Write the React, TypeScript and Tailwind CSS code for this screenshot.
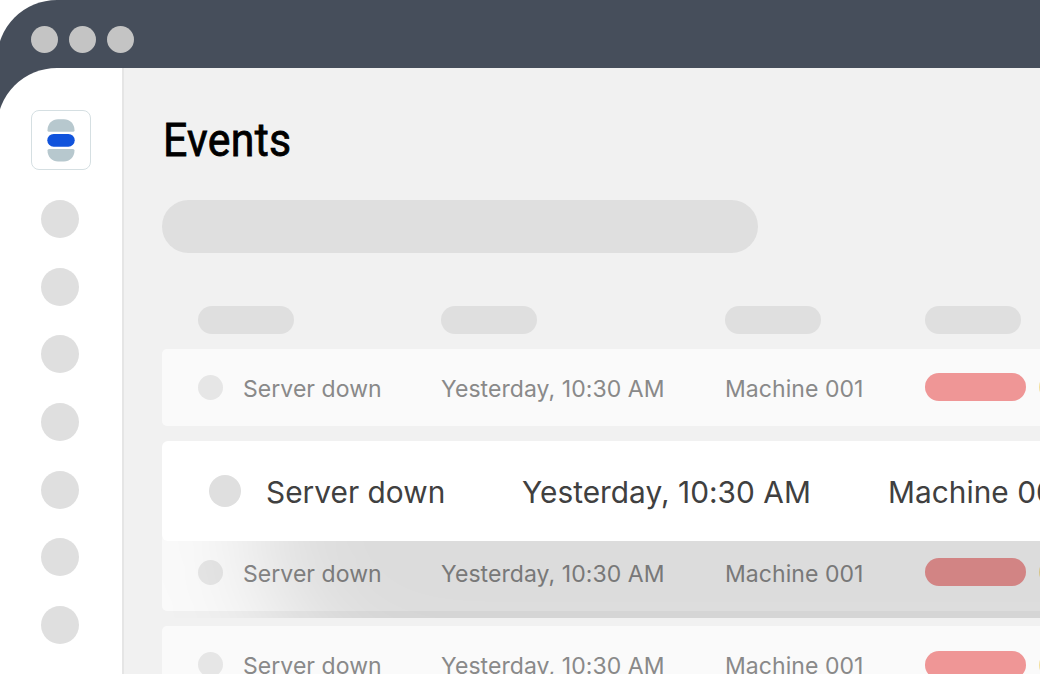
const columns = "grid grid-cols-[243px_284px_200px_114px_100px]";

function EventRow() {
  return (
    <div className={`${columns} h-[77.3px] w-[1000px] shrink-0 items-center rounded-[5px] bg-white/65 pl-9`}>
      <div className="flex items-center gap-5">
        <span className="size-[25px] rounded-full bg-[#e6e6e6]" />
        <Cell>Server down</Cell>
      </div>
      <Cell>Yesterday, 10:30 AM</Cell>
      <Cell>Machine 001</Cell>
      <span className="h-7 w-[101px] rounded-full bg-[#ef9696]" />
      <span className="h-7 w-[101px] rounded-full bg-[#f3df9b]" />
    </div>
  );
}

function Cell({ children }: { children: string }) {
  return (
    <span className="mt-[3px] whitespace-nowrap text-[23px] leading-7 tracking-[0.06px] text-[#898989]">{children}</span>
  );
}

function Logo() {
  return (
    <div className="flex size-[60px] items-center justify-center rounded-[8px] border border-[#d5dfe2] bg-white">
      <svg className="-mt-[1px]" width="28" height="44" viewBox="0 0 28 44" fill="none">
        <path d="M0.5 12.2C0.5 5.5 5.4 1.2 11 1.2H17C22.6 1.2 27.5 5.5 27.5 12.2Q27.5 13.7 26 13.7H2Q0.5 13.7 0.5 12.2Z" fill="#b7c8ce" />
        <rect x="0.3" y="16" width="27.4" height="12.7" rx="6.35" fill="#1053dc" />
        <path d="M0.5 32.5Q0.5 31 2 31H26Q27.5 31 27.5 32.5C27.5 39.2 22.6 43.5 17 43.5H11C5.4 43.5 0.5 39.2 0.5 32.5Z" fill="#b7c8ce" />
      </svg>
    </div>
  );
}

export default function App() {
  return (
    <div className="h-[674px] w-[1040px] overflow-hidden bg-white font-['Inter',sans-serif]">
      <div className="-ml-[3px] flex h-full flex-col rounded-tl-[60px] bg-[linear-gradient(#464e5b_130px,white_130px)]">
        <header className="flex h-[67.5px] shrink-0 items-center gap-[11px] pl-[34px] pt-3">
          <span className="size-[27px] rounded-full bg-[#c4c4c4]" />
          <span className="size-[27px] rounded-full bg-[#c4c4c4]" />
          <span className="size-[27px] rounded-full bg-[#c4c4c4]" />
        </header>
        <div className="flex min-h-0 flex-1 overflow-hidden rounded-tl-[60px] bg-white">
          <aside className="flex w-[127px] shrink-0 flex-col items-center border-r-2 border-[#e5e5e5] pl-[3px] pt-[42.5px]">
            <Logo />
            <div className="mt-[30px] flex flex-col gap-[29.7px] pr-[2px]">
              {[0, 1, 2, 3, 4, 5, 6].map((i) => (
                <span key={i} className="size-[38px] rounded-full bg-[#dfdfdf]" />
              ))}
            </div>
          </aside>
          <main className="min-w-0 flex-1 overflow-hidden bg-[#f1f1f1] pl-[38px] pt-[46px]">
            <h1 className="h-[52px] origin-left translate-x-[1px] translate-y-[1px] scale-x-[0.94] whitespace-nowrap font-['Roboto',sans-serif] text-[45.5px] font-normal leading-[52px] tracking-[0.3px] text-black [-webkit-text-stroke:0.8px_black]">
              Events
            </h1>
            <div className="mt-[34.5px] h-[52.5px] w-[596px] rounded-full bg-[#dfdfdf]" />
            <div className={`${columns} mt-[53px] w-[1000px] pl-9`}>
              {[0, 1, 2, 3].map((i) => (
                <span key={i} className="h-7 w-24 rounded-full bg-[#dfdfdf]" />
              ))}
            </div>
            <div className="relative mt-[15.2px] flex flex-col gap-[15.2px]">
              <EventRow />
              <div className="h-[77.3px]" />
              <EventRow />
              <div className="absolute left-0 top-[185px] h-[84px] w-[900px] overflow-hidden">
                <div className="absolute -top-[200px] left-[92px] h-[370px] w-[1200px] rounded-[185px] bg-black/[0.118] blur-[52px]" />
              </div>
              <div className="absolute left-0 top-[92.5px] flex h-[100px] w-[1200px] items-center rounded-[6px] bg-white pl-[47px] text-[29.8px] leading-9 tracking-[0.04px] text-[#404040]">
                <span className="size-8 rounded-full bg-[#dfdfdf]" />
                <span className="ml-[25px] mt-[2px] w-[256px] whitespace-nowrap">Server down</span>
                <span className="mt-[2px] w-[366px] whitespace-nowrap">Yesterday, 10:30 AM</span>
                <span className="mt-[2px] whitespace-nowrap">Machine 001</span>
              </div>
              <EventRow />
            </div>
          </main>
        </div>
      </div>
    </div>
  );
}
